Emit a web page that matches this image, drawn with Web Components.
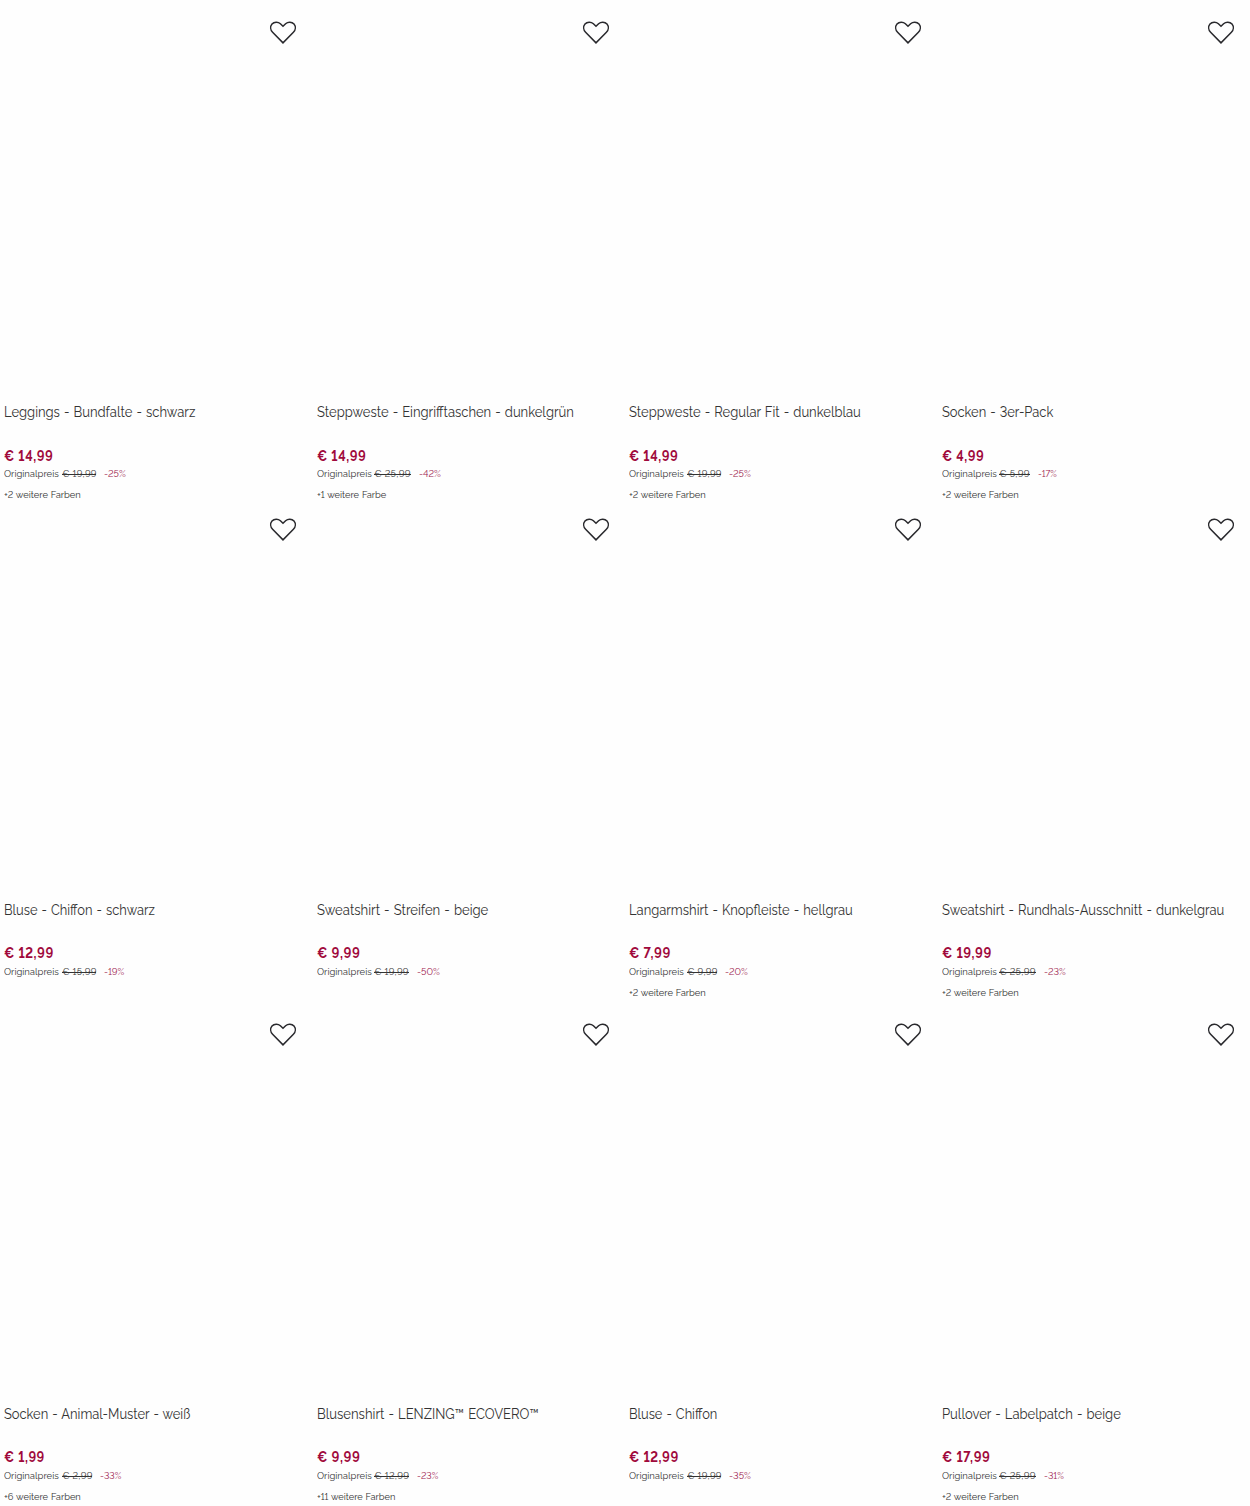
<!DOCTYPE html>
<html lang="de">
<head>
<meta charset="utf-8">
<title>Produkte</title>
<style>
body{margin:0;background:#fefefe;font-family:Raleway,Lato,"Open Sans",sans-serif;font-variant-numeric:lining-nums;color:#333}
</style>
</head>
<body>
<product-grid></product-grid>
<script>
// Single line of text condensed to an exact width, ligatures kept.
class FitText extends HTMLElement {
  connectedCallback() {
    const root = this.attachShadow({mode: 'open'});
    root.innerHTML = `<style>:host{display:block;white-space:nowrap}span{display:inline-block;transform-origin:0 50%}</style><span><slot></slot></span>`;
    const target = parseFloat(this.getAttribute('width'));
    const span = root.querySelector('span');
    this.style.width = target + 'px';
    span.style.transform = `scaleX(${(target + 0.3) / span.getBoundingClientRect().width})`;
  }
}
customElements.define('fit-text', FitText);

class WishHeart extends HTMLElement {
  connectedCallback() {
    this.attachShadow({mode: 'open'}).innerHTML = `
<style>:host{display:block;width:28px;height:25px}svg{display:block}</style>
<svg width="28" height="25" viewBox="0 0 28 25" fill="none" stroke="#29292d" stroke-width="1.5" stroke-linejoin="miter"><path d="M14 22.9 3.6 12.3C1.3 9.9 1.1 6.4 3 4.1 5.2 1.6 9 1.5 11.4 3.7L14 6.3l2.6-2.6C19 1.5 22.8 1.6 25 4.1c1.9 2.3 1.7 5.8-.6 8.2z"/></svg>`;
  }
}
customElements.define('wish-heart', WishHeart);

class ProductCard extends HTMLElement {
  set data(d) {
    const [title, tw, price, pw, old, ow, pct, cw, more, mw] = d;
    this.attachShadow({mode: 'open'}).innerHTML = `
<style>
:host{display:flex;flex-direction:column;box-sizing:border-box;padding-left:4.1px;min-width:0}
.media{height:402.4px;flex:none;display:flex;justify-content:flex-end;align-items:flex-start;box-sizing:border-box;padding:20px 15.2px 0 0}
.title{height:20px;font-size:14px;line-height:20px;margin-bottom:23.4px;word-spacing:.8px}
.price{height:20px;font-size:14px;line-height:20px;font-weight:700;letter-spacing:.6px;color:#a00a3c}
.was{height:14px;font-size:10px;line-height:14px;margin-top:1.5px;display:flex;color:#383838}
s{margin-left:3px;letter-spacing:.3px;text-decoration:none;background:linear-gradient(#333,#333) 0 7px/100% 1px no-repeat}
.pct{margin-left:8px;color:#a02450}
.more{height:14px;font-size:10px;line-height:14px;margin-top:7px;color:#333;word-spacing:.5px}
</style>
<div class="media"><wish-heart></wish-heart></div>
<div class="title"><fit-text width="${tw}">${title}</fit-text></div>
<div class="price"><fit-text width="${pw}">${price}</fit-text></div>
<div class="was"><fit-text width="54.5">Originalpreis</fit-text><s><fit-text width="${ow}">${old}</fit-text></s><span class="pct"><fit-text width="${cw}">${pct}</fit-text></span></div>
${more ? `<div class="more"><fit-text width="${mw}">${more}</fit-text></div>` : ''}`;
  }
}
customElements.define('product-card', ProductCard);

const two = ['+2 weitere Farben', 76.5];
const products = [
  ['Leggings - Bundfalte - schwarz',191,'€ 14,99',49,'€ 19,99',34.5,'-25%',21.5,...two],
  ['Steppweste - Eingrifftaschen - dunkelgrün',256.5,'€ 14,99',49,'€ 25,99',36.5,'-42%',21.5,'+1 weitere Farbe',69],
  ['Steppweste - Regular Fit - dunkelblau',231.5,'€ 14,99',49,'€ 19,99',34.5,'-25%',21.5,...two],
  ['Socken - 3er-Pack',111,'€ 4,99',42,'€ 5,99',30.5,'-17%',18.5,...two],
  ['Bluse - Chiffon - schwarz',150.5,'€ 12,99',49.5,'€ 15,99',34.5,'-19%',20],
  ['Sweatshirt - Streifen - beige',171,'€ 9,99',43,'€ 19,99',34.5,'-50%',22.5],
  ['Langarmshirt - Knopfleiste - hellgrau',223.5,'€ 7,99',41.5,'€ 9,99',30.5,'-20%',22.5,...two],
  ['Sweatshirt - Rundhals-Ausschnitt - dunkelgrau',282,'€ 19,99',49.5,'€ 25,99',36.5,'-23%',21.5,...two],
  ['Socken - Animal-Muster - weiß',186,'€ 1,99',40.5,'€ 2,99',30.5,'-33%',21,'+6 weitere Farben',76.5],
  ['Blusenshirt - LENZING™ ECOVERO™',221.5,'€ 9,99',43,'€ 12,99',35,'-23%',21,'+11 weitere Farben',78],
  ['Bluse - Chiffon',88,'€ 12,99',49.5,'€ 19,99',34.5,'-35%',21.5],
  ['Pullover - Labelpatch - beige',178.5,'€ 17,99',48,'€ 25,99',36.5,'-31%',19.5,...two]
];

class ProductGrid extends HTMLElement {
  connectedCallback() {
    const root = this.attachShadow({mode: 'open'});
    root.innerHTML = `<style>:host{display:grid;grid-template-columns:repeat(4,312.5px);grid-template-rows:497.3px 504.3px 504.4px;width:1250px;height:1506px;overflow:hidden}</style>`;
    for (const p of products) {
      const card = document.createElement('product-card');
      root.append(card);
      card.data = p;
    }
  }
}
customElements.define('product-grid', ProductGrid);
</script>
</body>
</html>
